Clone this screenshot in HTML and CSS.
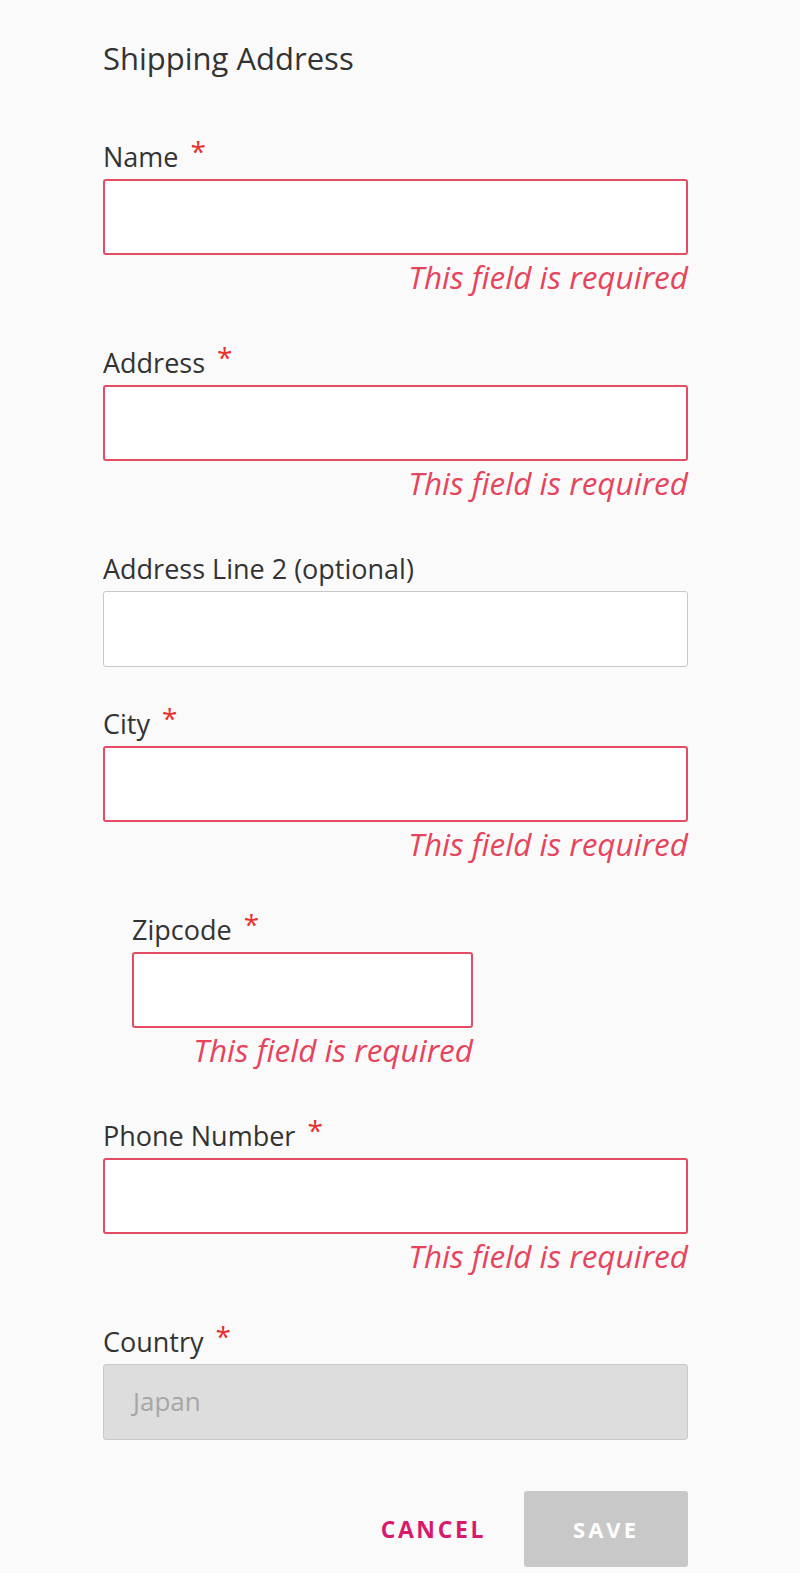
FILE: index.html
```html
<!DOCTYPE html>
<html lang="en">
<head>
<meta charset="utf-8">
<title>Shipping Address</title>
<link rel="stylesheet" href="styles.css">
</head>
<body>
<form class="form">
  <h1 class="title">Shipping Address</h1>

  <div class="field has-error">
    <label class="label">Name<span class="req">*</span></label>
    <div class="input"></div>
    <div class="error">This field is required</div>
  </div>

  <div class="field has-error">
    <label class="label">Address<span class="req">*</span></label>
    <div class="input"></div>
    <div class="error">This field is required</div>
  </div>

  <div class="field">
    <label class="label">Address Line 2 (optional)</label>
    <div class="input"></div>
  </div>

  <div class="field has-error">
    <label class="label">City<span class="req">*</span></label>
    <div class="input"></div>
    <div class="error">This field is required</div>
  </div>

  <div class="field has-error field-zip">
    <label class="label">Zipcode<span class="req">*</span></label>
    <div class="input"></div>
    <div class="error">This field is required</div>
  </div>

  <div class="field has-error">
    <label class="label">Phone Number<span class="req">*</span></label>
    <div class="input"></div>
    <div class="error">This field is required</div>
  </div>

  <div class="field">
    <label class="label">Country<span class="req">*</span></label>
    <div class="input input-disabled">Japan</div>
  </div>

  <div class="actions">
    <span class="btn-cancel">CANCEL</span>
    <span class="btn-save">SAVE</span>
  </div>
</form>
</body>
</html>
```

FILE: styles.css
```css
html, body {
  margin: 0;
  padding: 0;
  background: #fafafa;
  overflow: hidden;
}

body {
  font-family: "Open Sans", "Liberation Sans", sans-serif;
  color: #333333;
}

.form {
  padding: 38px 112px 0 103px;
  display: flex;
  flex-direction: column;
}

.title {
  margin: 0 0 63px 0;
  font-size: 31px;
  line-height: 40px;
  font-weight: 400;
  color: #333333;
}

.field {
  display: flex;
  flex-direction: column;
  margin-bottom: 41px;
}

.field-zip {
  margin-left: 29px;
  width: 341px;
}

.label {
  font-size: 27px;
  line-height: 32px;
  margin-bottom: 6px;
  color: #333333;
}

.req {
  color: #e8302e;
  font-size: 28px;
  line-height: 20px;
  margin-left: 12px;
  vertical-align: top;
}

.input {
  box-sizing: border-box;
  height: 76px;
  background: #ffffff;
  border: 1.5px solid #c8c8c8;
  border-radius: 3px;
}

.has-error .input {
  border: 2px solid #e34c62;
}

.input-disabled {
  background: #dddddd;
  border-color: #c9c9c9;
  color: #a6a6a6;
  font-size: 26px;
  line-height: 73px;
  padding-left: 29px;
}

.error {
  margin-top: 3px;
  margin-bottom: 10px;
  text-align: right;
  font-style: italic;
  font-size: 31.5px;
  line-height: 38px;
  color: #e6445c;
}

.actions {
  margin-top: 10px;
  display: flex;
  justify-content: flex-end;
  align-items: center;
  gap: 38px;
}

.btn-cancel {
  color: #d81a6e;
  font-weight: 700;
  font-size: 23px;
  letter-spacing: 2.6px;
}

.btn-save {
  box-sizing: border-box;
  width: 164px;
  height: 76px;
  display: flex;
  align-items: center;
  justify-content: center;
  background: #c8c8c8;
  border-radius: 3px;
  color: #ffffff;
  font-weight: 700;
  font-size: 22px;
  letter-spacing: 3px;
}
```
